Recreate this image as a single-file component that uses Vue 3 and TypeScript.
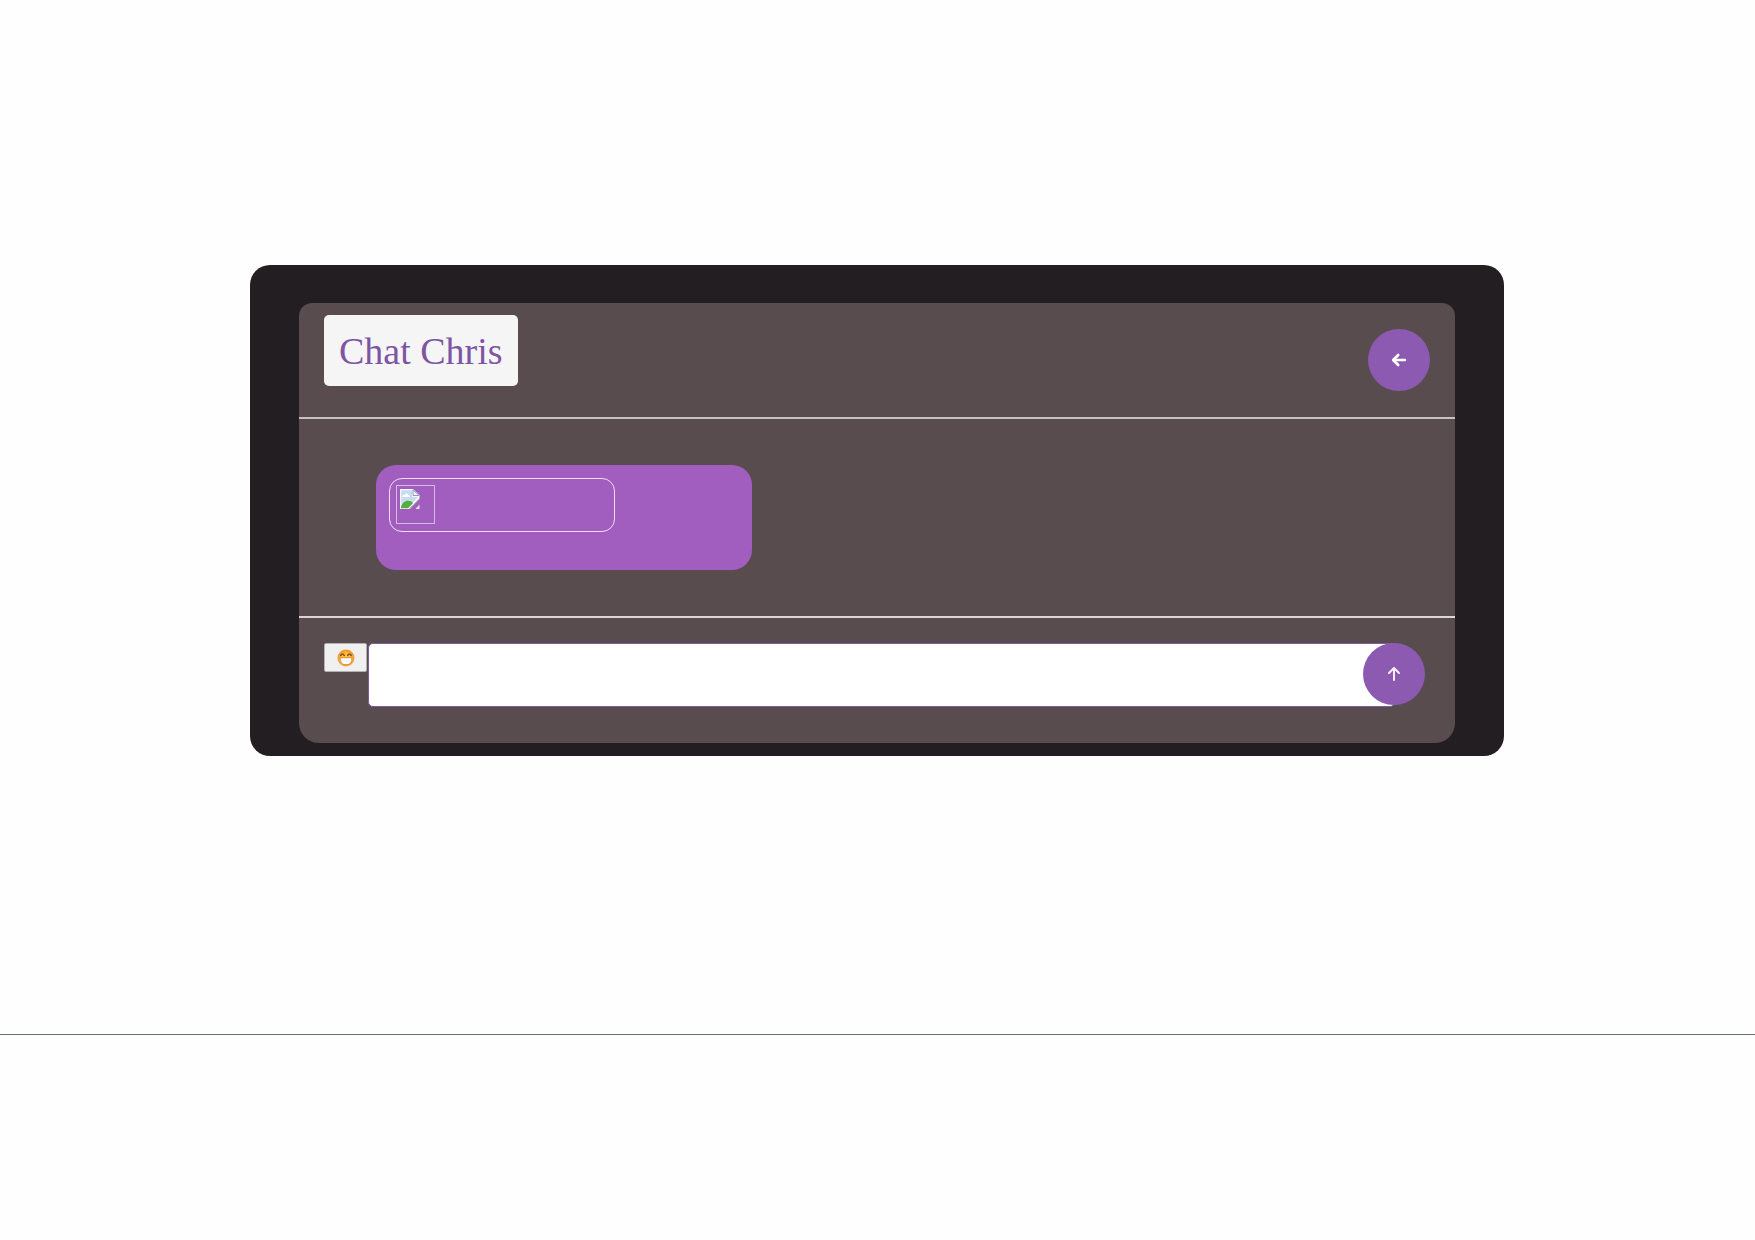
<script setup lang="ts">
import { ref } from 'vue'

const contact = ref('Chat Chris')
const draft = ref('')
</script>

<template>
  <div class="page">
    <main class="frame">
      <section class="chat">
        <header class="chat-header">
          <h1 class="title">{{ contact }}</h1>
          <button class="round" type="button" aria-label="Back">
            <svg width="16" height="16" viewBox="0 0 16 16" fill="none" stroke="#fff" stroke-width="2.6" stroke-linecap="round" stroke-linejoin="round">
              <path d="M14 8H2.500M7.200 3L2.200 8l5 5" />
            </svg>
          </button>
        </header>

        <div class="messages">
          <article class="message">
            <div class="author">
              <span class="avatar" role="img" aria-label="Avatar">
                <svg width="20" height="20" viewBox="0 0 20 20">
                  <path d="M0 0h13l6.500 6v4L10 20H0z" fill="#f6f9fc" />
                  <path d="M1.300 1.300H12V8h6L8 18.700H1.300z" fill="#c6dcf4" />
                  <path d="M2.500 8c-.5-2 1.500-2.500 2-1.500C5 4 8 4 8 6c2-.3 2 1 2 2z" fill="#fff" />
                  <path d="M.8 19.200C2 11 10 10 13 14l-5 5.200z" fill="#55ad3e" />
                  <path d="M13 .8V6.500h6z" fill="#f7f9fc" stroke="#8e9bb1" stroke-width="1" />
                  <path d="M9.500 20L20 9.500" stroke="#8b7f9f" stroke-width="1" />
                  <path d="M15.500 20l4-4.500V20z" fill="#dce8e6" />
                </svg>
              </span>
            </div>
          </article>
        </div>

        <form class="composer" @submit.prevent>
          <button class="emoji" type="button" aria-label="Choose emoji">
            <svg width="18" height="18" viewBox="0 0 18 18">
              <defs>
                <radialGradient id="face" cx=".5" cy=".55" r=".5">
                  <stop offset="0" stop-color="#ffd13a" />
                  <stop offset=".7" stop-color="#fdba2d" />
                  <stop offset="1" stop-color="#f0953a" />
                </radialGradient>
              </defs>
              <circle cx="9" cy="9" r="8.500" fill="url(#face)" />
              <path d="M3.700 6.500q1.800-3 3.600 0M10.700 6.500q1.800-3 3.600 0" fill="none" stroke="#8a501c" stroke-width="1.500" stroke-linecap="round" />
              <path d="M3 8.800h12q.2 7-6 7t-6-7z" fill="#fff" stroke="#c77a39" stroke-width=".8" />
              <path d="M3.500 12h11" stroke="#e6d4cc" stroke-width=".5" />
            </svg>
          </button>
          <textarea v-model="draft" class="draft" aria-label="Message"></textarea>
          <button class="round send" type="submit" aria-label="Send">
            <svg width="16" height="16" viewBox="0 0 16 16" fill="none" stroke="#f8eefc" stroke-width="2" stroke-linecap="round" stroke-linejoin="round">
              <path d="M8 14V2.500M3 7l5-5 5 5" />
            </svg>
          </button>
        </form>
      </section>
    </main>
    <hr class="rule" />
  </div>
</template>

<style>
body {
  margin: 0;
  background: #fefefe;
}
</style>

<style scoped>
.page {
  padding-top: 265px;
  font-family: "Liberation Serif", serif;
}
.page * {
  box-sizing: border-box;
}
.frame {
  margin: 0 251px 0 250px;
  padding: 38px 49px 13px;
  border-radius: 20px;
  background: #221e21;
}
.chat {
  border-radius: 13px 13px 20px 20px;
  background: #584c4e;
}
.chat-header {
  display: flex;
  align-items: flex-start;
  justify-content: space-between;
  height: 116px;
  padding: 12px 25px;
  border-bottom: 2px solid #c9c0c3;
}
.title {
  margin: 0;
  padding: 1px 15px 0;
  border-radius: 5px;
  background: #f5f5f6;
  color: #7e55a3;
  font-size: 38px;
  font-weight: 400;
  line-height: 70px;
}
.round {
  display: flex;
  flex: none;
  align-items: center;
  justify-content: center;
  width: 62px;
  height: 62px;
  padding: 0;
  border: 0;
  border-radius: 50%;
  background: #8c5ab1;
}
.chat-header .round {
  margin-top: 14px;
}
.messages {
  padding: 46px 77px;
}
.message {
  width: 376px;
  height: 105px;
  padding: 13px;
  border-radius: 20px;
  background: #a15ebe;
}
.author {
  width: 226px;
  height: 54px;
  padding: 6px;
  border: 1px solid #f1def6;
  border-radius: 13px;
}
.avatar {
  display: block;
  width: 39px;
  height: 39px;
  padding: 3px;
  border: 1px solid #d8b9e2;
}
.avatar svg {
  display: block;
}
.composer {
  display: flex;
  align-items: flex-start;
  padding: 25px 30px 36px 25px;
  border-top: 2px solid #ddd5d8;
}
.emoji {
  display: flex;
  flex: none;
  align-items: center;
  justify-content: center;
  width: 43px;
  height: 29px;
  margin-right: 1px;
  padding: 0;
  border: 1px solid #b5b0b5;
  border-radius: 2px;
  background: #f0f0f0;
}
.draft {
  flex: 1;
  min-width: 0;
  height: 64px;
  margin: 0;
  padding: 8px;
  border: 1px solid #8059a0;
  border-radius: 5px;
  background: #fff;
  font: inherit;
  resize: none;
  outline: 0;
}
.send {
  position: relative;
  margin-left: -32px;
}
.rule {
  height: 1px;
  margin: 278px 0 0;
  border: 0;
  background: #64707c;
}
</style>
